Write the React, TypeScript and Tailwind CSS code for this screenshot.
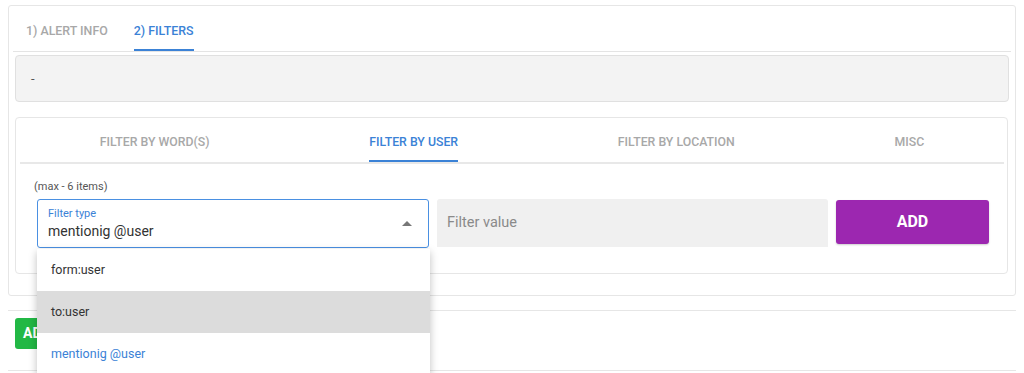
import React from "react";

export default function App() {
  const innerTabs = [
    { label: "FILTER BY WORD(S)", active: false },
    { label: "FILTER BY USER", active: true },
    { label: "FILTER BY LOCATION", active: false },
    { label: "MISC", active: false },
  ];
  return (
    <div className="relative w-[1024px] h-[373px] overflow-hidden bg-white font-['Roboto',sans-serif]">
      <div className="pt-[5px] px-[8px]">
        {/* outer card */}
        <div className="h-[291px] border border-[#e6e6e6] rounded-[3px] px-[6px]">
          <div className="mx-[-2px] flex h-[46px] items-stretch border-b border-[#e4e4e4] pl-[13px] gap-[26px]">
            <div className="flex items-center pt-[5px] text-[12.4px] font-medium text-[#a8a8a8]">1) ALERT INFO</div>
            <div className="relative flex items-center pt-[5px] text-[12.4px] font-medium text-[#3b82d6]">
              2) FILTERS
              <div className="absolute left-0 right-0 bottom-0 h-[2px] bg-[#3b82d6]" />
            </div>
          </div>
          <div className="mt-[3px] h-[47px] rounded-[4px] border border-[#e0e0e0] bg-[#f3f3f3] flex items-center pl-[15px] text-[13px] text-[#555]">
            -
          </div>
          {/* inner card */}
          <div className="mt-[15px] mr-[1px] h-[157px] rounded-[4px] border border-[#e6e6e6] pl-[4px] pr-[3px]">
            <div className="flex h-[46px] border-b-2 border-[#e8e8e8]">
              {innerTabs.map((t) => (
                <div key={t.label} className="flex-auto flex justify-center">
                  <div
                    className={
                      "relative flex items-center pt-[4px] text-[12.3px] font-medium " +
                      (t.active ? "text-[#3b82d6]" : "text-[#a8a8a8]")
                    }
                  >
                    {t.label}
                    {t.active && <div className="absolute left-0 right-0 bottom-[0px] h-[2px] bg-[#3b82d6]" />}
                  </div>
                </div>
              ))}
            </div>
            <div className="pl-[14px] pt-[16px] text-[11px] text-[#555] leading-[13px]">(max - 6 items)</div>
            <div className="flex pl-[17px] pt-[6px] gap-[8px]">
              <div className="relative w-[392px] h-[49px] rounded-[3px] border-[1.5px] border-[#4a90e2] pl-[10px]">
                <div className="pt-[7px] text-[11px] leading-[13px] text-[#3b82d6]">Filter type</div>
                <div className="pt-[2px] text-[14px] leading-[18px] text-[#333]">mentionig @user</div>
                <div className="absolute right-[16px] top-[21px] w-0 h-0 border-l-[5px] border-r-[5px] border-b-[5px] border-l-transparent border-r-transparent border-b-[#777]" />
              </div>
              <div className="w-[391px] h-[48px] bg-[#f0f0f0] rounded-t-[3px] flex items-center pl-[10px] text-[14.5px] text-[#8a8a8a]">
                Filter value
              </div>
              <button className="mt-[1px] w-[153px] h-[44px] rounded-[3px] bg-[#9c27b0] text-white text-[16px] font-bold shadow-[0_1px_2px_rgba(0,0,0,0.2)]">
                ADD
              </button>
            </div>
          </div>
        </div>
        <div className="mt-[14px] border-t border-[#e6e6e6]" />
        <div className="pt-[7px] pl-[7px]">
          <button className="h-[31px] px-[8px] rounded-[3px] bg-[#22b845] text-white text-[14px] font-bold">
            ADD FILTER
          </button>
        </div>
        <div className="mt-[21px] border-t border-[#e6e6e6]" />
      </div>

      {/* dropdown */}
      <div className="absolute left-[37px] top-[249px] w-[393px] bg-white shadow-[0_3px_8px_rgba(0,0,0,0.25)] text-[12.5px]">
        <div className="h-[42px] flex items-center pl-[14px] text-[#333]">form:user</div>
        <div className="h-[42px] flex items-center pl-[14px] text-[#333] bg-[#dcdcdc]">to:user</div>
        <div className="h-[42px] flex items-center pl-[14px] text-[#3b82d6]">mentionig @user</div>
      </div>
    </div>
  );
}
